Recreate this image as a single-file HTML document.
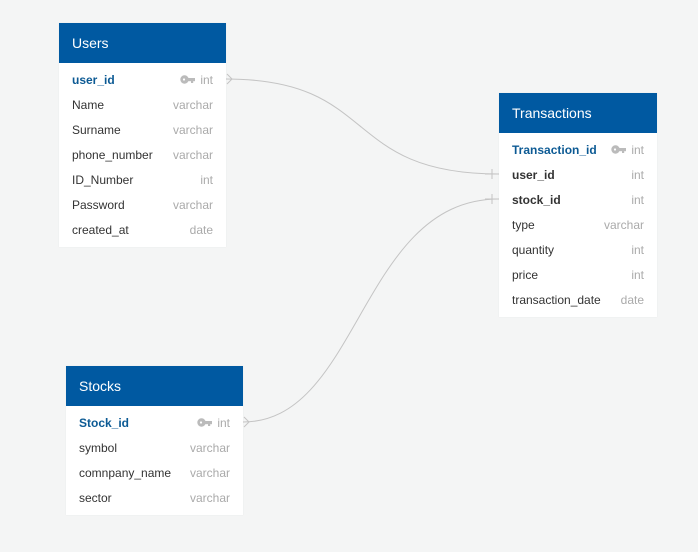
<!DOCTYPE html>
<html><head><style>
body{margin:0;width:698px;height:552px;background:#f4f5f5;font-family:"Liberation Sans",sans-serif;position:relative;overflow:hidden}
.t{position:absolute;background:#fff;box-shadow:0 0 1px rgba(0,0,0,.08)}
.h{background:#0059a1;color:#fff;font-size:14px;height:40px;line-height:40px;padding-left:13px}
.rows{padding:5px 0 4px}
.r{height:25px;line-height:25px;font-size:12px;color:#333;padding:0 13px;display:flex;justify-content:space-between}
.r span:last-child{color:#aaa}
.pk span:first-child{color:#0c5a94;font-weight:bold}
.b span:first-child{font-weight:bold}
.k{display:inline-block;vertical-align:middle;margin-right:5px;margin-top:-2px}
</style></head><body>
<svg style="position:absolute;left:0;top:0" width="698" height="552">
<g fill="none" stroke="#c4c4c4" stroke-width="1">
<path d="M226 79 C380 79,340 174,499 174"/>
<path d="M243 422 C360 422,360 199,499 199"/>
<path d="M227 74 L232 79 L227 84"/>
<path d="M244 417 L249 422 L244 427"/>
<path d="M492 169 V179 M485 174 H499"/>
<path d="M492 194 V204 M485 199 H499"/>
</g></svg>
<div class="t" style="left:59px;top:23px;width:167px">
<div class="h">Users</div><div class="rows">
<div class="r pk"><span>user_id</span><span><svg class="k" width="15" height="9"><circle cx="4.5" cy="4.5" r="4.2" fill="#bbb"/><rect x="7" y="3" width="8" height="3.2" fill="#bbb"/><rect x="11" y="5" width="2.2" height="3" fill="#bbb"/><circle cx="4" cy="4.5" r="1.1" fill="#fff"/></svg>int</span></div>
<div class="r"><span>Name</span><span>varchar</span></div>
<div class="r"><span>Surname</span><span>varchar</span></div>
<div class="r"><span>phone_number</span><span>varchar</span></div>
<div class="r"><span>ID_Number</span><span>int</span></div>
<div class="r"><span>Password</span><span>varchar</span></div>
<div class="r"><span>created_at</span><span>date</span></div>
</div></div>
<div class="t" style="left:499px;top:93px;width:158px">
<div class="h">Transactions</div><div class="rows">
<div class="r pk"><span>Transaction_id</span><span><svg class="k" width="15" height="9"><circle cx="4.5" cy="4.5" r="4.2" fill="#bbb"/><rect x="7" y="3" width="8" height="3.2" fill="#bbb"/><rect x="11" y="5" width="2.2" height="3" fill="#bbb"/><circle cx="4" cy="4.5" r="1.1" fill="#fff"/></svg>int</span></div>
<div class="r b"><span>user_id</span><span>int</span></div>
<div class="r b"><span>stock_id</span><span>int</span></div>
<div class="r"><span>type</span><span>varchar</span></div>
<div class="r"><span>quantity</span><span>int</span></div>
<div class="r"><span>price</span><span>int</span></div>
<div class="r"><span>transaction_date</span><span>date</span></div>
</div></div>
<div class="t" style="left:66px;top:366px;width:177px">
<div class="h">Stocks</div><div class="rows">
<div class="r pk"><span>Stock_id</span><span><svg class="k" width="15" height="9"><circle cx="4.5" cy="4.5" r="4.2" fill="#bbb"/><rect x="7" y="3" width="8" height="3.2" fill="#bbb"/><rect x="11" y="5" width="2.2" height="3" fill="#bbb"/><circle cx="4" cy="4.5" r="1.1" fill="#fff"/></svg>int</span></div>
<div class="r"><span>symbol</span><span>varchar</span></div>
<div class="r"><span>comnpany_name</span><span>varchar</span></div>
<div class="r"><span>sector</span><span>varchar</span></div>
</div></div>
</body></html>
